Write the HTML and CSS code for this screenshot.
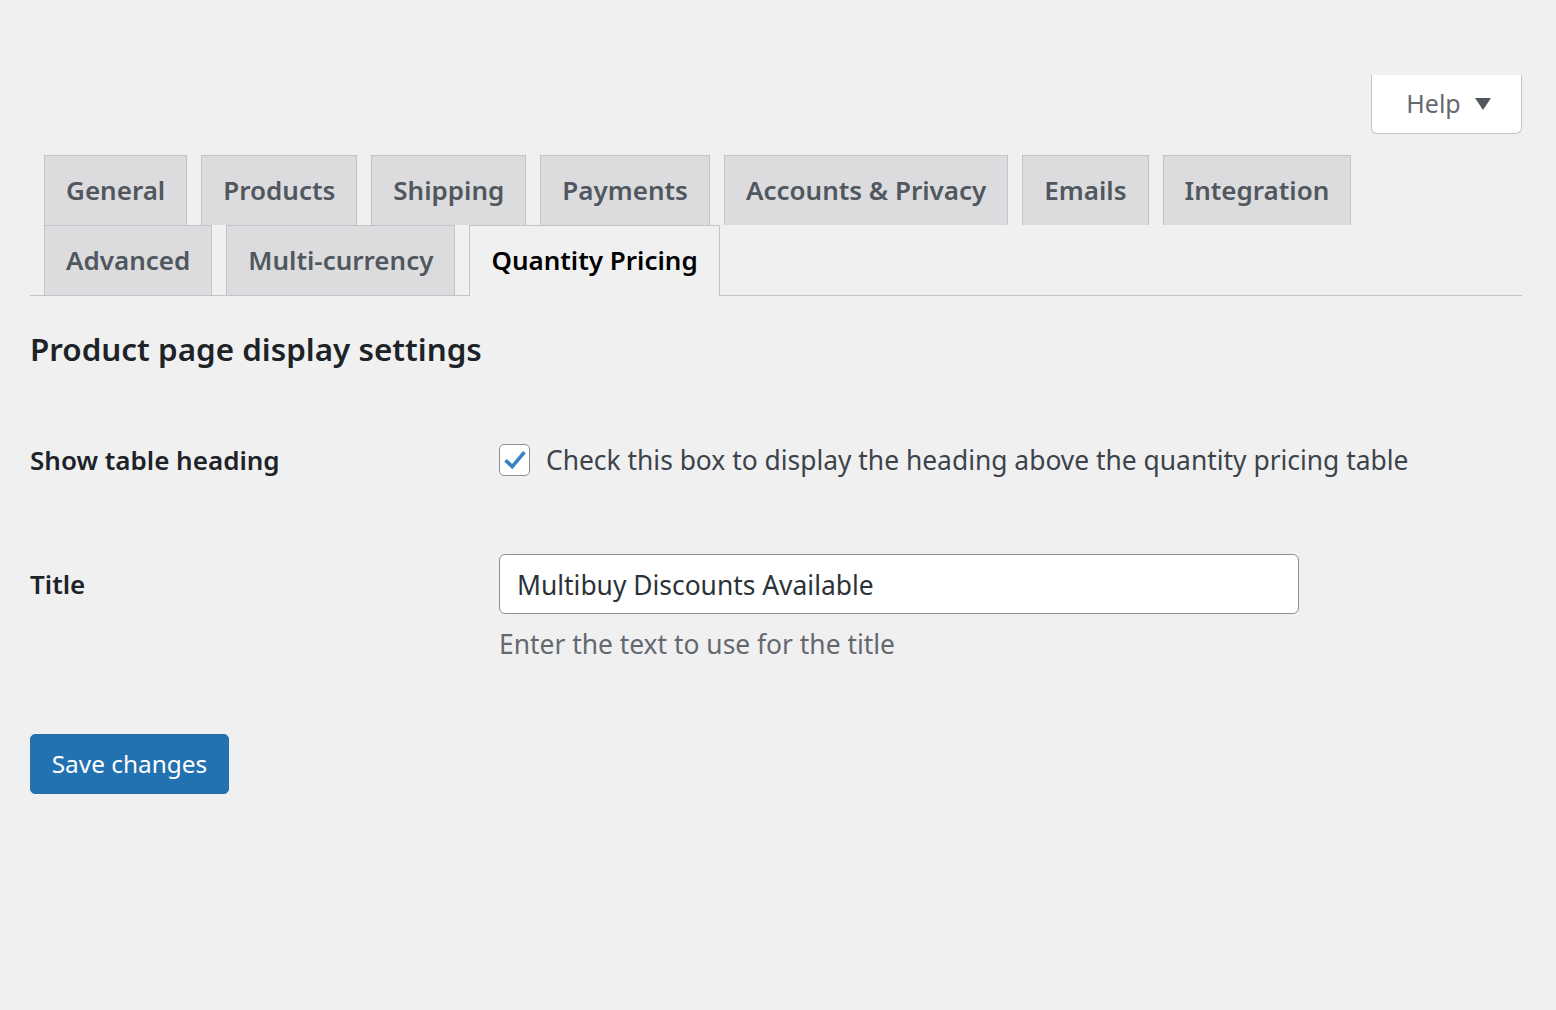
FILE: index.html
```html
<!DOCTYPE html>
<html lang="en">
<head>
<meta charset="utf-8">
<title>Quantity Pricing Settings</title>
<link rel="stylesheet" href="styles.css">
</head>
<body>
<div class="wrap">
  <div class="screen-meta">
    <button class="help-btn" type="button">Help <span class="caret"></span></button>
  </div>
  <nav class="nav-tabs">
    <a class="nav-tab">General</a>
    <a class="nav-tab">Products</a>
    <a class="nav-tab">Shipping</a>
    <a class="nav-tab">Payments</a>
    <a class="nav-tab">Accounts &amp; Privacy</a>
    <a class="nav-tab">Emails</a>
    <a class="nav-tab">Integration</a>
    <a class="nav-tab">Advanced</a>
    <a class="nav-tab">Multi-currency</a>
    <a class="nav-tab nav-tab-active">Quantity Pricing</a>
  </nav>
  <h2 class="section-title">Product page display settings</h2>
  <div class="form-table">
    <div class="form-row row-check">
      <div class="label">Show table heading</div>
      <div class="field">
        <label class="check-label">
          <span class="checkbox">
            <svg viewBox="0 0 22 20" width="22" height="20"><path d="M1.5 10.2 L8.2 16.6 L20.4 2.2" fill="none" stroke="#3582c4" stroke-width="3.6" stroke-linejoin="miter"/></svg>
          </span>
          Check this box to display the heading above the quantity pricing table
        </label>
      </div>
    </div>
    <div class="form-row row-title">
      <div class="label">Title</div>
      <div class="field">
        <div class="text-input">Multibuy Discounts Available</div>
        <p class="description">Enter the text to use for the title</p>
      </div>
    </div>
  </div>
  <button class="button-primary" type="button">Save changes</button>
</div>
</body>
</html>
```

FILE: styles.css
```css
html, body {
  margin: 0;
  padding: 0;
  background: #f0f0f1;
}
body {
  font-family: "Noto Sans", "Open Sans", sans-serif;
  color: #1d2327;
}
.wrap {
  padding: 0 34px 0 30px;
}
.screen-meta {
  display: flex;
  justify-content: flex-end;
  padding-top: 75px;
}
.help-btn {
  width: 151px;
  height: 59px;
  background: #fff;
  border: 1px solid #c3c4c7;
  border-top: none;
  border-radius: 0 0 6px 6px;
  font-family: inherit;
  font-size: 25px;
  color: #646970;
  display: flex;
  align-items: center;
  justify-content: center;
  gap: 14px;
  padding: 0 0 2px 4px;
}
.caret {
  width: 0;
  height: 0;
  border-left: 8px solid transparent;
  border-right: 8px solid transparent;
  border-top: 12px solid #50575e;
  margin-top: 2px;
}
.nav-tabs {
  display: flex;
  flex-wrap: wrap;
  margin-top: 21px;
  border-bottom: 1px solid #c3c4c7;
  padding-right: 150px;
}
.nav-tab {
  margin-left: 14px;
  padding: 0 21px;
  height: 69px;
  line-height: 68px;
  border: 1px solid #c3c4c7;
  border-bottom: none;
  background: #dcdcde;
  color: #50575e;
  font-size: 26px;
  font-weight: 600;
  white-space: nowrap;
}
.nav-tab-active {
  background: #f0f0f1;
  color: #000;
  margin-bottom: -1px;
  height: 70px;
}
.section-title {
  margin: 33px 0 0;
  font-size: 31.4px;
  line-height: 40px;
  font-weight: 600;
  color: #1d2327;
}
.form-table {
  margin-top: 71px;
}
.form-row {
  display: grid;
  grid-template-columns: 469px 1fr;
}
.label {
  font-size: 26px;
  font-weight: 600;
  color: #1d2327;
}
.row-check .label {
  line-height: 40px;
}
.row-title {
  margin-top: 74px;
}
.row-title .label {
  line-height: 60px;
}
.check-label {
  display: flex;
  align-items: center;
  gap: 16px;
  font-size: 26.4px;
  line-height: 40px;
  color: #3c434a;
}
.checkbox {
  width: 31px;
  height: 32px;
  box-sizing: border-box;
  border: 1px solid #8c8f94;
  border-radius: 5px;
  background: #fff;
  display: flex;
  align-items: center;
  justify-content: center;
}
.checkbox svg {
  display: block;
  margin: 0 0 1px 0;
}
.text-input {
  width: 800px;
  height: 60px;
  box-sizing: border-box;
  border: 1px solid #8c8f94;
  border-radius: 6px;
  background: #fff;
  padding: 0 17px;
  font-size: 26.4px;
  line-height: 60px;
  color: #2c3338;
}
.description {
  margin: 10px 0 0;
  font-size: 26.4px;
  line-height: 40px;
  color: #646970;
}
.button-primary {
  margin-top: 70px;
  width: 199px;
  height: 60px;
  background: #2271b1;
  border: 1px solid #2271b1;
  border-radius: 5px;
  color: #fff;
  font-family: inherit;
  font-size: 24.4px;
  padding: 0 0 2px;
}
```
